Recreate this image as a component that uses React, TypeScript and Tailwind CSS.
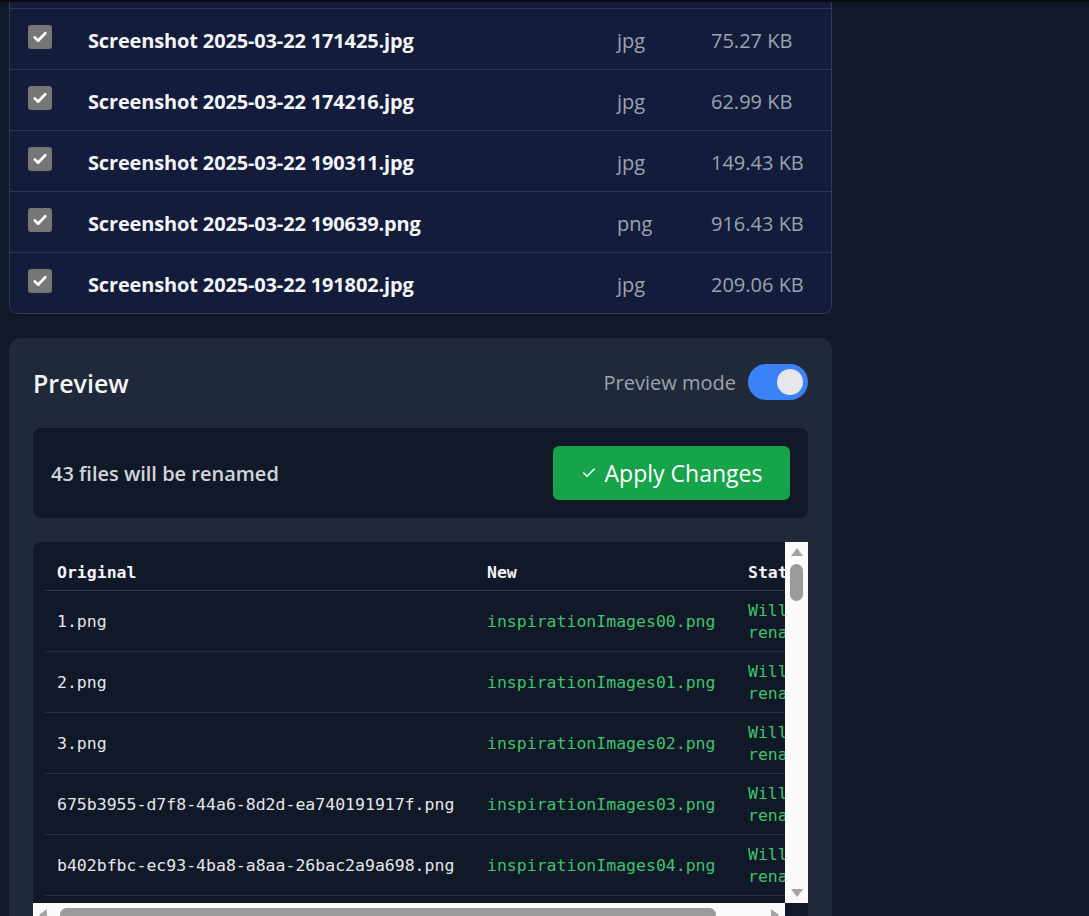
import { Check } from "lucide-react";

const files = [
  { name: "Screenshot 2025-03-22 170958.jpg", type: "jpg", size: "88.12 KB" },
  { name: "Screenshot 2025-03-22 171425.jpg", type: "jpg", size: "75.27 KB" },
  { name: "Screenshot 2025-03-22 174216.jpg", type: "jpg", size: "62.99 KB" },
  { name: "Screenshot 2025-03-22 190311.jpg", type: "jpg", size: "149.43 KB" },
  { name: "Screenshot 2025-03-22 190639.png", type: "png", size: "916.43 KB" },
  { name: "Screenshot 2025-03-22 191802.jpg", type: "jpg", size: "209.06 KB" },
];

const renames = [
  { from: "1.png", to: "inspirationImages00.png" },
  { from: "2.png", to: "inspirationImages01.png" },
  { from: "3.png", to: "inspirationImages02.png" },
  { from: "675b3955-d7f8-44a6-8d2d-ea740191917f.png", to: "inspirationImages03.png" },
  { from: "b402bfbc-ec93-4ba8-a8aa-26bac2a9a698.png", to: "inspirationImages04.png" },
  { from: "c5e1a9d0-77b2-4f3e-9a41-0d2c6b8e1f57.png", to: "inspirationImages05.png" },
];

function CheckBox() {
  return (
    <div className="w-6 h-6 rounded-[3px] bg-[#767676] flex items-center justify-center">
      <svg viewBox="0 0 24 24" className="w-[18px] h-[18px]" fill="none" stroke="white" strokeWidth="3.6" strokeLinecap="round" strokeLinejoin="round">
        <path d="M5 12.5l4.5 4.5L19 7" />
      </svg>
    </div>
  );
}

export default function App() {
  return (
    <div className="h-screen overflow-hidden bg-[#111827] font-['Open_Sans',sans-serif]">
      <div className="h-[2px] bg-[#0a0d14] relative z-10" />

      {/* ── FILE LIST (scrolled) ── */}
      <div className="ml-[9px] w-[823px] -mt-[55px] rounded-lg border border-[#2f3b58] bg-[#131c3b] overflow-hidden">
        {files.map((f, i) => {
          const last = i === files.length - 1;
          return (
            <div
              key={f.name}
              className={last ? "h-[60px] flex items-center" : "h-[61px] flex items-center border-b border-[#2b3756]"}
            >
              <div className="w-[78px] pl-[18px] -mt-[4px]">
                <CheckBox />
              </div>
              <div className="w-[529px] mt-[3px] text-[20px] font-bold text-[#f3f4f6] tracking-[-0.15px]">{f.name}</div>
              <div className="w-[94px] mt-[3px] text-[20px] text-[#9ca3af]">{f.type}</div>
              <div className="mt-[3px] text-[20px] text-[#9ca3af]">{f.size}</div>
            </div>
          );
        })}
      </div>

      {/* ── PREVIEW ── */}
      <div className="ml-[9px] mt-[24px] w-[823px] rounded-xl bg-[#1f2937] pt-6 px-6">
        <div className="h-10 flex items-center justify-between">
          <h2 className="mt-[3px] text-[25px] font-semibold text-[#f3f4f6]">Preview</h2>
          <div className="flex items-center gap-3">
            <span className="mt-[1px] text-[20px] text-[#9ca3af]">Preview mode</span>
            <div className="w-[60px] h-9 rounded-full bg-[#3b82f6] flex items-center justify-end pr-[5px]">
              <div className="w-[26px] h-[26px] rounded-full bg-[#e5e7eb]" />
            </div>
          </div>
        </div>

        <div className="mt-[26px] rounded-lg bg-[#111827] p-[18px] flex items-center justify-between">
          <span className="mt-[1px] text-[20px] font-semibold text-[#d1d5db]">43 files will be renamed</span>
          <button className="h-[54px] w-[237px] rounded-md bg-[#16a34a] text-white text-[23px] flex items-center justify-center gap-2">
            <Check className="w-[16px] h-[16px]" strokeWidth={2.2} />
            Apply Changes
          </button>
        </div>

        <div className="mt-6 rounded-tl-lg bg-[#111827] flex flex-col">
          <div className="flex h-[361px]">
            <div className="flex-1 overflow-hidden pt-[13px] pl-3 font-['DejaVu_Sans_Mono',monospace] text-[16.5px]">
              <table className="border-collapse text-left">
                <thead>
                  <tr className="border-b border-[#2f3746]">
                    <th className="w-[430px] min-w-[430px] px-3 py-2 leading-[19px] font-bold text-[#f3f4f6]">Original</th>
                    <th className="w-[261px] min-w-[261px] px-3 py-2 leading-[19px] font-bold text-[#f3f4f6]">New</th>
                    <th className="w-[96px] min-w-[96px] px-3 py-2 leading-[19px] font-bold text-[#f3f4f6]">Status</th>
                  </tr>
                </thead>
                <tbody>
                  {renames.map((r) => (
                    <tr key={r.from} className="border-b border-[#2a3240]">
                      <td className="px-3 pt-[9px] pb-[7px] leading-[22px] text-[#e5e7eb] whitespace-nowrap">{r.from}</td>
                      <td className="px-3 pt-[9px] pb-[7px] leading-[22px] text-[#3ec46d] whitespace-nowrap">{r.to}</td>
                      <td className="px-3 pt-[9px] pb-[7px] leading-[22px] text-[#3ec46d] break-words">Will rename</td>
                    </tr>
                  ))}
                </tbody>
              </table>
            </div>

            {/* vertical scrollbar */}
            <div className="w-[23px] bg-[#fafafa] flex flex-col items-center py-[5px]">
              <svg viewBox="0 0 14 10" className="w-[14px] h-[10px]"><path d="M7 1L13 9H1Z" fill="#a3a3a3" /></svg>
              <div className="mt-[7px] w-[13px] h-[37px] rounded-full bg-[#9a9a9a]" />
              <div className="flex-1" />
              <svg viewBox="0 0 14 10" className="w-[14px] h-[10px]"><path d="M1 1H13L7 9Z" fill="#a3a3a3" /></svg>
            </div>
          </div>

          {/* horizontal scrollbar */}
          <div className="h-[23px] bg-[#fafafa] flex items-center px-[5px] mr-[23px]">
            <svg viewBox="0 0 10 14" className="w-[10px] h-[14px]"><path d="M9 1V13L1 7Z" fill="#a3a3a3" /></svg>
            <div className="ml-[12px] w-[656px] h-[13px] rounded-full bg-[#9a9a9a]" />
            <div className="flex-1" />
            <svg viewBox="0 0 10 14" className="w-[10px] h-[14px]"><path d="M1 1L9 7L1 13Z" fill="#a3a3a3" /></svg>
          </div>
        </div>
      </div>
    </div>
  );
}
